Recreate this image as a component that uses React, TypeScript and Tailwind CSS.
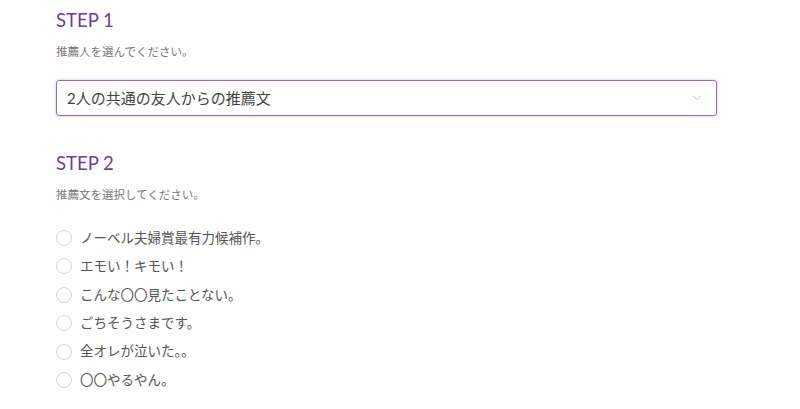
import { ChevronDown } from 'lucide-react';

const options = [
  'ノーベル夫婦賞最有力候補作。',
  'エモい！キモい！',
  'こんな〇〇見たことない。',
  'ごちそうさまです。',
  '全オレが泣いた。。',
  '〇〇やるやん。',
];

const font = { fontFamily: 'Lato, "Noto Sans CJK JP", sans-serif' };

export default function App() {
  return (
    <div className="min-h-[409px] w-[800px] bg-white" style={font}>
      <div className="pl-[56px] pr-[83px] pt-[7px]">
        <h2 className="text-[18.5px] leading-[26px] text-[#6a3d9e]">STEP 1</h2>
        <p className="mt-[10px] text-[11.5px] leading-[18px] text-[#777]">推薦人を選んでください。</p>

        <div className="mt-[19px] flex h-[36px] items-center justify-between rounded-[3px] border-[1.5px] border-[#9070c4] pl-[10px] pr-[12px] shadow-[0_0_3px_rgba(138,99,192,0.45)]">
          <span className="text-[15px] text-[#444]">2人の共通の友人からの推薦文</span>
          <ChevronDown className="h-[14px] w-[14px] text-[#bbb]" strokeWidth={1.5} />
        </div>

        <h2 className="mt-[34px] text-[18.5px] leading-[26px] text-[#6a3d9e]">STEP 2</h2>
        <p className="mt-[10px] text-[11.5px] leading-[18px] text-[#777]">推薦文を選択してください。</p>

        <ul className="mt-[24px] flex flex-col gap-[8.4px]">
          {options.map((o) => (
            <li key={o} className="flex h-[20px] items-center gap-[8px]">
              <span className="h-[16px] w-[16px] shrink-0 rounded-full border border-[#d4d4d4]" />
              <span className="text-[13.5px] text-[#555]">{o}</span>
            </li>
          ))}
        </ul>
      </div>
    </div>
  );
}
